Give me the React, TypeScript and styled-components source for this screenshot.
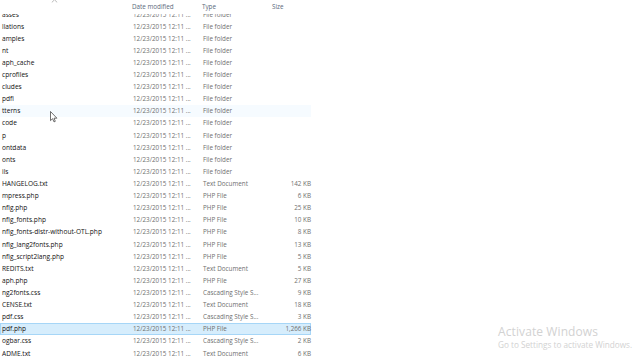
import { createGlobalStyle } from "styled-components";
import styled from "styled-components";

const GlobalStyle = createGlobalStyle`
  html, body {
    margin: 0;
    padding: 0;
    background: #ffffff;
    overflow: hidden;
  }
  body {
    font-family: "Open Sans", "Noto Sans", "DejaVu Sans", sans-serif;
  }
`;

const Window = styled.div`
  position: relative;
  width: 640px;
  height: 360px;
  overflow: hidden;
  background: #ffffff;
`;

const cols = "130px 70px 70px 41px";

const Header = styled.div`
  display: grid;
  grid-template-columns: ${cols};
  height: 13.5px;
  align-items: start;
  font-size: 6.3px;
  color: #5b6a7c;
`;

const HeadCell = styled.div<{ $first?: boolean }>`
  position: relative;
  padding-left: ${({ $first }) => ($first ? "1px" : "2px")};
  white-space: nowrap;
  line-height: 13px;
`;

const SortArrow = styled.svg`
  position: absolute;
  left: 51px;
  top: -1px;
`;

const ListView = styled.div`
  height: 346.5px;
  overflow: hidden;
`;

const Rows = styled.div`
  margin-top: -5.56px;
`;

const Row = styled.div<{ $selected?: boolean; $hover?: boolean }>`
  display: grid;
  grid-template-columns: ${cols};
  width: 311px;
  height: 12.12px;
  box-sizing: border-box;
  align-items: center;
  font-size: 6.3px;
  border: 0.6px solid
    ${({ $selected }) => ($selected ? "#a6d6f7" : "transparent")};
  background: ${({ $selected, $hover }) =>
    $selected ? "#d6edfc" : $hover ? "#f6fbff" : "transparent"};
`;

const NameCell = styled.div`
  padding-left: 1px;
  font-size: 6.6px;
  color: #111111;
  white-space: nowrap;
  overflow: hidden;
`;

const InfoCell = styled.div<{ $right?: boolean }>`
  color: #6f6f6f;
  white-space: nowrap;
  overflow: hidden;
  padding-left: ${({ $right }) => ($right ? "0" : "2px")};
  padding-right: ${({ $right }) => ($right ? "1px" : "0")};
  text-align: ${({ $right }) => ($right ? "right" : "left")};
`;

const Cursor = styled.svg`
  position: absolute;
  left: 50px;
  top: 111px;
`;

const Watermark = styled.div`
  position: absolute;
  left: 498px;
  top: 325px;
  color: #d2d2d2;
  line-height: 1.2;
`;

const WatermarkTitle = styled.div`
  font-size: 12px;
  letter-spacing: 0.1px;
`;

const WatermarkText = styled.div`
  font-size: 8.2px;
  margin-top: 1px;
`;

type Item = { name: string; type: string; size?: string; sel?: boolean; hover?: boolean };

const FOLDER = "File folder";
const PHP = "PHP File";
const TXT = "Text Document";
const CSS = "Cascading Style S...";

const items: Item[] = [
  { name: "asses", type: FOLDER },
  { name: "llations", type: FOLDER },
  { name: "amples", type: FOLDER },
  { name: "nt", type: FOLDER },
  { name: "aph_cache", type: FOLDER },
  { name: "cprofiles", type: FOLDER },
  { name: "cludes", type: FOLDER },
  { name: "pdfi", type: FOLDER },
  { name: "tterns", type: FOLDER, hover: true },
  { name: "code", type: FOLDER },
  { name: "p", type: FOLDER },
  { name: "ontdata", type: FOLDER },
  { name: "onts", type: FOLDER },
  { name: "ils", type: FOLDER },
  { name: "HANGELOG.txt", type: TXT, size: "142 KB" },
  { name: "mpress.php", type: PHP, size: "6 KB" },
  { name: "nfig.php", type: PHP, size: "25 KB" },
  { name: "nfig_fonts.php", type: PHP, size: "10 KB" },
  { name: "nfig_fonts-distr-without-OTL.php", type: PHP, size: "8 KB" },
  { name: "nfig_lang2fonts.php", type: PHP, size: "13 KB" },
  { name: "nfig_script2lang.php", type: PHP, size: "5 KB" },
  { name: "REDITS.txt", type: TXT, size: "5 KB" },
  { name: "aph.php", type: PHP, size: "27 KB" },
  { name: "ng2fonts.css", type: CSS, size: "9 KB" },
  { name: "CENSE.txt", type: TXT, size: "18 KB" },
  { name: "pdf.css", type: CSS, size: "3 KB" },
  { name: "pdf.php", type: PHP, size: "1,266 KB", sel: true },
  { name: "ogbar.css", type: CSS, size: "2 KB" },
  { name: "ADME.txt", type: TXT, size: "6 KB" },
];

export default function App() {
  return (
    <Window>
      <GlobalStyle />
      <Header>
        <HeadCell $first>
          <SortArrow width="7" height="4" viewBox="0 0 7 4">
            <path d="M0.8 3.4 L3.5 0.8 L6.2 3.4" fill="none" stroke="#a8a8a8" strokeWidth="0.8" />
          </SortArrow>
        </HeadCell>
        <HeadCell>Date modified</HeadCell>
        <HeadCell>Type</HeadCell>
        <HeadCell>Size</HeadCell>
      </Header>
      <ListView>
        <Rows>
          {items.map((it, key) => (
            <Row key={key} $selected={it.sel} $hover={it.hover}>
              <NameCell>{it.name}</NameCell>
              <InfoCell>12/23/2015 12:11 ...</InfoCell>
              <InfoCell>{it.type}</InfoCell>
              <InfoCell $right>{it.size ?? ""}</InfoCell>
            </Row>
          ))}
        </Rows>
      </ListView>
      <Cursor width="8" height="12" viewBox="0 0 8 12">
        <path
          d="M0.5 0.5 L0.5 9.6 L2.6 7.7 L4 10.9 L5.3 10.3 L4 7.2 L6.9 7.2 Z"
          fill="#ffffff"
          stroke="#333333"
          strokeWidth="0.7"
          strokeLinejoin="round"
        />
      </Cursor>
      <Watermark>
        <WatermarkTitle>Activate Windows</WatermarkTitle>
        <WatermarkText>Go to Settings to activate Windows.</WatermarkText>
      </Watermark>
    </Window>
  );
}
